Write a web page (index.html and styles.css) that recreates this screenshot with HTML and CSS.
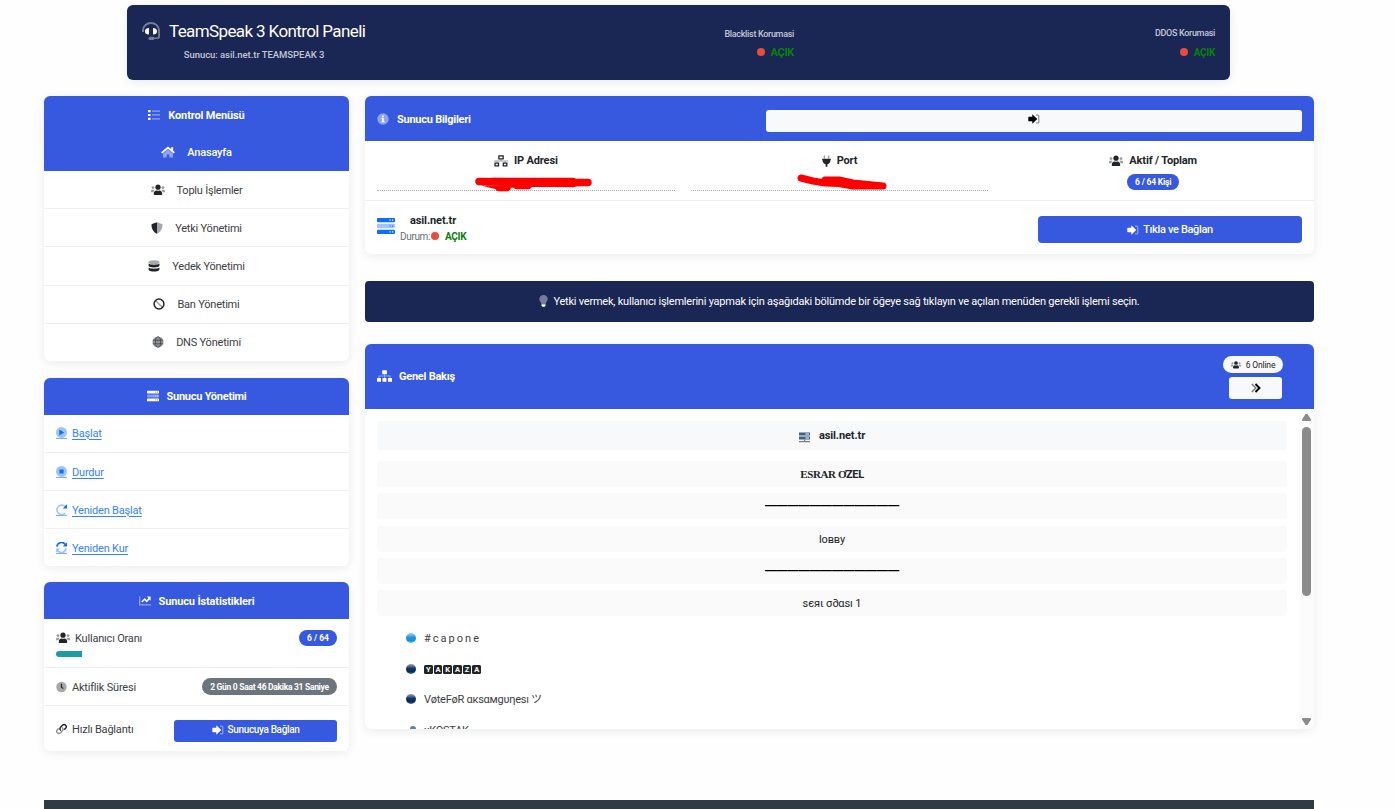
FILE: index.html
```
<!DOCTYPE html>
<html lang="tr">
<head>
    <meta charset="UTF-8">
    <meta name="viewport" content="width=device-width, initial-scale=1.0">
    <title>TeamSpeak 3 Kontrol Paneli</title>
    <link rel="stylesheet" href="styles.css">
</head>
<body>

    <!-- Icon set -->
    <svg class="sprite" xmlns="http://www.w3.org/2000/svg">
        <symbol id="i-headset" viewBox="0 0 18 18">
            <path opacity=".4" d="M0 10V8.500a9 8.500 0 0 1 18 0V14.500a2.500 2.500 0 0 1-2.500 2.500H12v1H8a1.600 1.600 0 0 1 0-3.200h4v.6h3.200c.6 0 .9-.3.900-.9V8.500a7 6.500 0 0 0-14.100 0V10z"/>
            <path d="M3 9.300C3 7.500 4.200 6 7 6v6.500C4.200 12.500 3 11.500 3 9.300zM15 9.300C15 7.500 13.800 6 11 6v6.500c2.800 0 4-1 4-3.200z"/>
        </symbol>
        <symbol id="i-list" viewBox="0 0 12 12">
            <path d="M0 1h2.600v2.200H0zM0 4.900h2.600v2.200H0zM0 8.800h2.600V11H0z"/>
            <path opacity=".45" d="M4 1.400h8v1.300H4zM4 5.300h8v1.300H4zM4 9.200h8v1.300H4z"/>
        </symbol>
        <symbol id="i-home" viewBox="0 0 14 12">
            <path opacity=".45" d="M7 3.200 2 7.400v3.700c0 .3.200.5.500.5h3.200V8.600h2.600v3h3.200c.3 0 .5-.2.500-.5V7.400z"/>
            <path d="M7 .5.100 6.300l1.100 1.300L7 2.800l5.800 4.800 1.100-1.300-1.700-1.500V1.300h-2v1.800z"/>
        </symbol>
        <symbol id="i-users" viewBox="0 0 14 12">
            <circle cx="7" cy="3.200" r="2.600"/>
            <path d="M2.800 9.900c0-2.100 1-3.500 2.700-3.500.9.500 2.100.5 3 0 1.700 0 2.700 1.400 2.700 3.500 0 .8-.3 1.100-1 1.100H3.800c-.7 0-1-.3-1-1.100z"/>
            <g opacity=".45"><circle cx="2" cy="3.600" r="1.400"/><circle cx="12" cy="3.600" r="1.400"/><path d="M0 7.400C0 6.300.5 5.700 1.200 5.700h1.600c.3 0 .6.100.8.300C2.900 6.500 2.500 7.400 2.400 8.200H0zM14 7.400c0-1.100-.5-1.700-1.200-1.700h-1.600c-.3 0-.6.100-.8.300.7.500 1.100 1.400 1.200 2.200H14z"/></g>
        </symbol>
        <symbol id="i-shield" viewBox="0 0 12 12">
            <path d="M6 .3v11.400C3 10.300.6 7.500.5 2.900c0-.5.200-.7.500-.8z"/>
            <path opacity=".4" d="M6 .3v11.400c3-1.400 5.400-4.200 5.500-8.800 0-.5-.2-.7-.5-.8z"/>
        </symbol>
        <symbol id="i-database" viewBox="0 0 12 12">
            <ellipse opacity=".4" cx="6" cy="2.200" rx="5.400" ry="2"/>
            <path d="M.6 3.600c1.700 1.600 9.100 1.600 10.800 0v2.200c0 2.200-10.800 2.200-10.800 0z"/>
            <path d="M.6 7.500c1.700 1.600 9.100 1.600 10.800 0v2.200c0 2.400-10.800 2.400-10.800 0z"/>
        </symbol>
        <symbol id="i-ban" viewBox="0 0 12 12">
            <circle cx="6" cy="6" r="4.900" fill="none" stroke="currentColor" stroke-width="1.500"/>
            <path opacity=".45" d="m3 2.100 7 6.900-1 1L2.100 3z"/>
        </symbol>
        <symbol id="i-globe" viewBox="0 0 12 12">
            <circle opacity=".5" cx="6" cy="6" r="5.500"/>
            <g fill="none" stroke="currentColor" stroke-width=".8" opacity=".7"><ellipse cx="6" cy="6" rx="2.600" ry="5.200"/><path d="M.8 4.200h10.400M.8 7.800h10.400"/></g>
        </symbol>
        <symbol id="i-server" viewBox="0 0 18 16">
            <path fill-rule="evenodd" d="M1 0h16q1 0 1 1v2.300q0 1-1 1H1q-1 0-1-1V1q0-1 1-1zm11.500 1.600v1.200h1.200V1.600zm2.500 0v1.200h1.200V1.600zM1 11.700h16q1 0 1 1V15q0 1-1 1H1q-1 0-1-1v-2.300q0-1 1-1zm11.500 1.600v1.200h1.200v-1.200zm2.500 0v1.200h1.200v-1.200z"/>
            <path opacity=".4" d="M1 5.800h16q1 0 1 1v2.400q0 1-1 1H1q-1 0-1-1V6.800q0-1 1-1z"/>
            <path d="M12.500 7.400h1.200v1.200h-1.200zM15 7.400h1.200v1.200H15z"/>
        </symbol>
        <symbol id="i-play" viewBox="0 0 12 12">
            <circle opacity=".4" cx="6" cy="6" r="6"/>
            <path d="M3.600 2.800v6.400l5.400-3.200z"/>
        </symbol>
        <symbol id="i-stop" viewBox="0 0 12 12">
            <circle opacity=".4" cx="6" cy="6" r="6"/>
            <path d="M3.700 3.700h4.600v4.600H3.700z"/>
        </symbol>
        <symbol id="i-redo" viewBox="0 0 12 12">
            <path opacity=".4" d="M10 2.800A5.200 5.200 0 1 0 10 10" fill="none" stroke="currentColor" stroke-width="1.800"/>
            <path d="M12 .4v4.600H7.400z"/>
        </symbol>
        <symbol id="i-sync" viewBox="0 0 12 12">
            <path d="M1 5A5 5 0 0 1 10 2.600" fill="none" stroke="currentColor" stroke-width="1.900"/>
            <path d="M12 .2v4.700H7.400z"/>
            <g opacity=".4"><path d="M11 7A5 5 0 0 1 2 9.400" fill="none" stroke="currentColor" stroke-width="1.900"/><path d="M0 11.800V7.100h4.600z"/></g>
        </symbol>
        <symbol id="i-chart" viewBox="0 0 12 12">
            <path opacity=".45" d="M0 1.500h1.300v7.700H12v1.400H0z"/>
            <path d="M11.600 1.500v4.200l-1.200-1.200-2.600 2.900L5.600 5.200 3.400 7.500l-1.100-1.100 3.300-3.500L7.800 5l1.600-1.700L8 1.500z"/>
        </symbol>
        <symbol id="i-clock" viewBox="0 0 12 12">
            <circle opacity=".4" cx="6" cy="6" r="5.700"/>
            <path d="M5.300 2.500h1.300v3.300l1.700 1.600-.8.900-2.200-1.900z"/>
        </symbol>
        <symbol id="i-link" viewBox="0 0 12 12">
            <g fill="none" stroke="currentColor" stroke-width="1.600"><path d="M5.300 7.700C4 6.400 4 5 5 4l2-2c2.500-2.300 5.500.800 3.500 3.200L9 6.700"/><path opacity=".5" d="M6.700 4.300C8 5.600 8 7 7 8l-2 2C2.500 12.300-.5 9.200 1.500 6.800L3 5.300"/></g>
        </symbol>
        <symbol id="i-signin" viewBox="0 0 12 12">
            <path d="M4.300 1.200 9.300 6l-5 4.800V8.300H.9Q.3 8.300.3 7.600V4.400q0-.7.600-.7h3.400z"/>
            <path opacity=".4" d="M8 1.500h1.800q1.600 0 1.600 1.600v5.800q0 1.600-1.600 1.600H8V9.300h1.600q.5 0 .5-.5V3.200q0-.5-.5-.5H8z"/>
        </symbol>
        <symbol id="i-info" viewBox="0 0 12 12">
            <circle opacity=".45" cx="6" cy="6" r="5.700"/>
            <path d="M5 2.400h1.800V4H5zM4.500 4.800h2.300v3.300h.7v1.100H4.500V8.100h.7V5.900h-.7z"/>
        </symbol>
        <symbol id="i-network" viewBox="0 0 14 12">
            <path fill="none" stroke="currentColor" stroke-width="1.300" d="M4.900.9h4.200v2.900H4.900zM1 8.100h3.500v2.800H1zM9.300 8.100h3.500v2.800H9.300z"/>
            <path opacity=".45" d="M6.500 4.400h1v1.100H14v1h-2.500v1h-1v-1h-7v1h-1v-1H0v-1h6.500z"/>
        </symbol>
        <symbol id="i-plug" viewBox="0 0 9 12">
            <path opacity=".45" d="M1.700.4h1.400v3.200H1.700zM5.900.4h1.400v3.200H5.900z"/>
            <path d="M.2 3.800h8.600V5h-.3c0 2.300-1.200 3.900-3.100 4.300v2.400H3.600V9.300C1.700 8.900.5 7.300.5 5H.2z"/>
        </symbol>
        <symbol id="i-bulb" viewBox="0 0 9 12">
            <path opacity=".4" d="M4.500.1a4.200 4.200 0 0 1 4.200 4.200c0 2-1.700 2.700-2 4.600H2.300C2 7 .3 6.300.3 4.300A4.200 4.200 0 0 1 4.500.1z"/>
            <path d="M2.500 9.300h4v1.200l-.8 1.300H3.300l-.8-1.300z"/>
        </symbol>
        <symbol id="i-sitemap" viewBox="0 0 15 12">
            <path d="M5.700.2h3.700q.5 0 .5.500v3q0 .5-.5.500H5.700q-.5 0-.5-.5v-3q0-.5.500-.5zM.5 8h3q.5 0 .5.500v2.800q0 .5-.5.500h-3q-.5 0-.5-.5V8.500Q0 8 .5 8zM6 8h3q.5 0 .5.500v2.800q0 .5-.5.500H6q-.5 0-.5-.5V8.500Q5.500 8 6 8zM11.500 8h3q.5 0 .5.500v2.800q0 .5-.5.500h-3q-.5 0-.5-.5V8.500q0-.5.500-.5z"/>
            <path opacity=".45" d="M7 4.200h1v1.300h5.600V8h-1V6.500H8V8H7V6.500H2.400V8h-1V5.500H7z"/>
        </symbol>
        <symbol id="i-angles" viewBox="0 0 10 10">
            <path opacity=".5" d="m.8 1 4 4-4 4" fill="none" stroke="currentColor" stroke-width="1.500"/>
            <path d="m4.500 1 4 4-4 4" fill="none" stroke="currentColor" stroke-width="1.900"/>
        </symbol>
        <symbol id="i-node" viewBox="0 0 11 11">
            <path fill="#3f6184" d="M0 .5h11v3H0zM0 4.500h11v3H0z"/>
            <path fill="#fff" d="M6.500 1.500h3.500v1H6.500zM6.500 5.500h3.500v1H6.500z"/>
            <path fill="#777f86" d="M5 7.500h1.200V9H11v1.200H0V9h5z"/>
        </symbol>
    </svg>

    <!-- Top header -->
    <header class="topbar">
        <div class="brand">
            <div class="brand-title"><svg class="icon icon-lg"><use href="#i-headset"/></svg>TeamSpeak 3 Kontrol Paneli</div>
            <div class="brand-sub">Sunucu: asil.net.tr TEAMSPEAK 3</div>
        </div>
        <div class="protection protection-mid">
            <div class="protection-label">Blacklist Korumasi</div>
            <div class="status"><i class="dot"></i>AÇIK</div>
        </div>
        <div class="protection">
            <div class="protection-label">DDOS Korumasi</div>
            <div class="status status-sm"><i class="dot"></i>AÇIK</div>
        </div>
    </header>

    <main class="layout">
        <aside class="sidebar">
            <!-- Control menu -->
            <section class="card">
                <h2 class="card-header"><svg class="icon"><use href="#i-list"/></svg>Kontrol Menüsü</h2>
                <nav class="menu">
                    <a class="menu-item active"><svg class="icon icon-wide"><use href="#i-home"/></svg>Anasayfa</a>
                    <a class="menu-item"><svg class="icon icon-wide"><use href="#i-users"/></svg>Toplu İşlemler</a>
                    <a class="menu-item"><svg class="icon"><use href="#i-shield"/></svg>Yetki Yönetimi</a>
                    <a class="menu-item tall"><svg class="icon"><use href="#i-database"/></svg>Yedek Yönetimi</a>
                    <a class="menu-item"><svg class="icon"><use href="#i-ban"/></svg>Ban Yönetimi</a>
                    <a class="menu-item"><svg class="icon"><use href="#i-globe"/></svg>DNS Yönetimi</a>
                </nav>
            </section>

            <!-- Server management -->
            <section class="card">
                <h2 class="card-header card-header-server"><svg class="icon"><use href="#i-server"/></svg>Sunucu Yönetimi</h2>
                <ul class="actions">
                    <li><span class="action-icon"><svg class="icon"><use href="#i-play"/></svg></span><a>Başlat</a></li>
                    <li><span class="action-icon"><svg class="icon"><use href="#i-stop"/></svg></span><a>Durdur</a></li>
                    <li><span class="action-icon"><svg class="icon"><use href="#i-redo"/></svg></span><a>Yeniden Başlat</a></li>
                    <li><span class="action-icon"><svg class="icon"><use href="#i-sync"/></svg></span><a>Yeniden Kur</a></li>
                </ul>
            </section>

            <!-- Server statistics -->
            <section class="card">
                <h2 class="card-header"><svg class="icon"><use href="#i-chart"/></svg>Sunucu İstatistikleri</h2>
                <div class="stat stat-users">
                    <div class="stat-line">
                        <span class="stat-label"><svg class="icon icon-wide"><use href="#i-users"/></svg>Kullanıcı Oranı</span>
                        <span class="badge badge-ratio">6 / 64</span>
                    </div>
                    <div class="progress"><div class="progress-bar" style="width: 9.375%"></div></div>
                </div>
                <div class="stat">
                    <div class="stat-line">
                        <span class="stat-label stat-uptime"><svg class="icon"><use href="#i-clock"/></svg>Aktiflik Süresi</span>
                        <span class="badge badge-grey">2 Gün 0 Saat 46 Dakika 31 Saniye</span>
                    </div>
                </div>
                <div class="stat stat-connect">
                    <div class="stat-line">
                        <span class="stat-label"><svg class="icon"><use href="#i-link"/></svg>Hızlı Bağlantı</span>
                        <a class="btn btn-sm"><svg class="icon"><use href="#i-signin"/></svg>Sunucuya Bağlan</a>
                    </div>
                </div>
            </section>
        </aside>

        <div class="content">
            <!-- Server info -->
            <section class="card info">
                <div class="info-header">
                    <h2><svg class="icon"><use href="#i-info"/></svg>Sunucu Bilgileri</h2>
                    <a class="btn-light"><svg class="icon"><use href="#i-signin"/></svg></a>
                </div>
                <div class="info-grid">
                    <div class="info-cell dotted">
                        <div class="info-name"><svg class="icon icon-wide"><use href="#i-network"/></svg>IP Adresi</div>
                        <svg class="scribble" width="118" height="15" viewBox="0 0 118 15"><path d="M4 4.500 60 5l53 .5M8 5l16 4M24 7h30M24 10.500h8M42 8.500h11M60 5l40 1M18 4.500h80M56 6l42 .5" fill="none" stroke="#f00" stroke-width="7.500" stroke-linecap="round" stroke-linejoin="round"/></svg>
                    </div>
                    <div class="info-cell dotted">
                        <div class="info-name"><svg class="icon icon-slim"><use href="#i-plug"/></svg>Port</div>
                        <svg class="scribble scribble-port" width="90" height="16" viewBox="0 0 90 16"><path d="m4 4 12 3 12 2 28 1 30 2M28 6h14l14 3 30 3H56L28 7" fill="none" stroke="#f00" stroke-width="7" stroke-linecap="round" stroke-linejoin="round"/></svg>
                    </div>
                    <div class="info-cell">
                        <div class="info-name"><svg class="icon icon-wide"><use href="#i-users"/></svg>Aktif / Toplam</div>
                        <span class="badge badge-people">6 / 64 Kişi</span>
                    </div>
                </div>
                <div class="server-row">
                    <svg class="server-icon"><use href="#i-server"/></svg>
                    <div class="server-meta">
                        <div class="server-name">asil.net.tr</div>
                        <div class="server-state">Durum:<i class="dot"></i><b>AÇIK</b></div>
                    </div>
                    <a class="btn btn-connect"><svg class="icon"><use href="#i-signin"/></svg>Tıkla ve Bağlan</a>
                </div>
            </section>

            <div class="notice"><svg class="icon icon-slim"><use href="#i-bulb"/></svg>Yetki vermek, kullanıcı işlemlerini yapmak için aşağıdaki bölümde bir öğeye sağ tıklayın ve açılan menüden gerekli işlemi seçin.</div>

            <!-- Overview tree -->
            <section class="card overview">
                <div class="overview-header">
                    <h2><svg class="icon icon-sitemap"><use href="#i-sitemap"/></svg>Genel Bakış</h2>
                    <div class="overview-tools">
                        <span class="badge badge-online"><svg class="icon"><use href="#i-users"/></svg>6 Online</span>
                        <a class="btn-light btn-more"><svg class="icon"><use href="#i-angles"/></svg></a>
                    </div>
                </div>
                <div class="overview-body">
                    <div class="tree">
                        <div class="tree-root"><svg class="icon"><use href="#i-node"/></svg>asil.net.tr</div>
                        <div class="channel channel-bold"><span><span class="serif">ESRAR Ơ</span>ZEL</span></div>
                        <div class="channel channel-line">————————————</div>
                        <div class="channel gap-top">loвву</div>
                        <div class="channel channel-line">————————————</div>
                        <div class="channel">ѕєяι σ∂αѕı 1</div>
                        <div class="user"><i class="orb orb-light"></i><span class="spaced"># c a p o n e</span></div>
                        <div class="user"><i class="orb"></i><span class="tiles"><b>Y</b><b>A</b><b>K</b><b>A</b><b>Z</b><b>A</b></span></div>
                        <div class="user"><i class="orb"></i><span>VøteFøR αкѕαмgυηeѕı ツ</span></div>
                        <div class="user user-last"><i class="orb orb-away"></i><span>xKOSTAK</span></div>
                    </div>
                    <div class="scrollbar">
                        <i class="arrow-up"></i>
                        <i class="thumb"></i>
                        <i class="arrow-down"></i>
                    </div>
                </div>
            </section>
        </div>
    </main>

    <footer class="footer"></footer>

</body>
</html>
```
FILE: styles.css
```
* {
    box-sizing: border-box;
}
html, body {
    height: 809px;
    overflow: hidden;
}
body {
    margin: 0;
    padding: 5px 0 0 44px;
    background-color: #fefefe;
    color: #212529;
    font-family: Roboto, "Noto Sans", "Noto Sans CJK JP", sans-serif;
    font-size: 11px;
    line-height: 16px;
}
h2 {
    margin: 0;
    font-size: 11px;
    font-weight: 700;
}
.sprite {
    display: none;
}
.icon {
    width: 12px;
    height: 12px;
    flex: none;
    fill: currentColor;
}
.icon-wide {
    width: 14px;
}
.icon-sitemap {
    width: 15px;
}
.icon-slim {
    width: 9px;
}
.icon-lg {
    width: 18px;
    height: 18px;
}
.dot {
    width: 8px;
    height: 8px;
    border-radius: 50%;
    background-color: #e74c3c;
}

/* Top header */
.topbar {
    display: flex;
    width: 1103px;
    height: 75px;
    margin-left: 83px;
    padding: 0 15px;
    border-radius: 6px;
    background-color: #1a2654;
    box-shadow: 0 2px 10px rgba(0, 0, 0, 0.08);
    color: #fff;
}
.brand {
    width: 224px;
    padding-top: 16px;
    text-align: center;
}
.brand-title {
    display: flex;
    align-items: center;
    gap: 9px;
    height: 20px;
    font-size: 17px;
    letter-spacing: -0.62px;
    white-space: nowrap;
}
.brand-sub {
    margin-top: 6px;
    color: #c3c7d4;
    font-size: 9.5px;
    font-weight: 500;
    letter-spacing: -0.05px;
}
.protection {
    margin-left: auto;
    padding-top: 20px;
    color: #c3c7d4;
    font-size: 9px;
    font-weight: 500;
    letter-spacing: -0.31px;
    text-align: right;
}
.protection-mid {
    width: 428px;
    margin-left: 0;
    padding-top: 21px;
}
.protection-label {
    height: 16px;
}
.status {
    display: flex;
    justify-content: flex-end;
    align-items: center;
    gap: 6px;
    height: 20px;
    padding-top: 1px;
    color: #0a800a;
    font-size: 11px;
    font-weight: 700;
}
.status .dot {
    margin-top: -1px;
}
.status-sm {
    margin-top: 1px;
    font-size: 10px;
}

/* Layout */
.layout {
    display: grid;
    grid-template-columns: 305px 949px;
    gap: 16px;
    height: 704px;
    margin-top: 16px;
}
.card {
    border-radius: 6px;
    background-color: #fff;
    box-shadow: 0 2px 10px rgba(0, 0, 0, 0.08);
    overflow: hidden;
}
.sidebar .card {
    margin-bottom: 16px;
}
.sidebar .card:first-child {
    margin-bottom: 17px;
}
.card-header {
    display: flex;
    justify-content: center;
    align-items: center;
    gap: 8px;
    height: 37px;
    padding-top: 2px;
    background-color: #3659e0;
    color: #fff;
    letter-spacing: -0.15px;
}
.card-header-server {
    padding-top: 1px;
    letter-spacing: -0.25px;
}
.card-header .icon {
    margin-top: -2px;
}

/* Control menu */
.menu-item {
    display: flex;
    justify-content: center;
    align-items: center;
    gap: 12px;
    height: 38px;
    padding-top: 2px;
    border-bottom: 1px solid #f0f0f1;
    color: #3c4044;
    letter-spacing: -0.22px;
}
.menu-item .icon {
    margin-top: -2px;
    color: #212529;
}
.menu-item.tall {
    height: 39px;
    padding-top: 1px;
}
.menu-item.tall ~ .menu-item {
    padding-top: 1px;
}
.menu-item:last-child {
    height: 37px;
    border-bottom: none;
}
.menu-item.active {
    border-color: #3659e0;
    background-color: #3659e0;
    color: #fff;
    font-weight: 500;
}
.menu-item.active .icon {
    color: #fff;
}

/* Server actions */
.actions {
    margin: 0;
    padding: 0;
    list-style: none;
}
.actions li {
    display: flex;
    align-items: center;
    gap: 5px;
    height: 38px;
    padding: 2px 0 0 12px;
    border-bottom: 1px solid #f0f0f1;
    color: #0d6efd;
    letter-spacing: -0.2px;
}
.actions li:first-child {
    padding-top: 0;
}
.actions li:last-child {
    height: 37px;
    border-bottom: none;
}
.actions a {
    color: #3483fd;
    text-decoration: underline;
    text-underline-offset: 2px;
}
.action-icon {
    display: flex;
    width: 11px;
    height: 12px;
    margin-top: -2px;
    border-bottom: 1px solid #79aefd;
}
.action-icon .icon {
    width: 11px;
    height: 11px;
}

/* Statistics */
.stat {
    height: 38px;
    padding: 0 12px;
    border-bottom: 1px solid #f0f0f1;
}
.stat-users {
    height: 49px;
}
.stat-connect {
    height: 45px;
    padding-top: 3px;
    border-bottom: none;
}
.stat-line {
    display: flex;
    justify-content: space-between;
    align-items: center;
    height: 37px;
}
.stat-users .stat-line {
    height: 38px;
}
.stat-connect .stat-line {
    height: 43px;
}
.stat-label {
    display: flex;
    align-items: center;
    gap: 5px;
    padding-top: 1px;
    color: #3c4044;
    letter-spacing: -0.2px;
}
.stat-uptime {
    padding-top: 2px;
}
.stat-connect .stat-label {
    padding: 0 0 2px;
}
.stat-label .icon {
    width: 11px;
    margin-top: -1px;
    color: #212529;
}
.stat-label .icon-wide {
    width: 14px;
}
.progress {
    height: 6px;
    margin-top: -6px;
    border-radius: 3px;
    overflow: hidden;
}
.progress-bar {
    height: 6px;
    background-color: #1c9ca3;
}
.badge {
    display: inline-flex;
    justify-content: center;
    align-items: center;
    height: 16px;
    border-radius: 9px;
    background-color: #3659e0;
    color: #fff;
    font-size: 8.5px;
    font-weight: 700;
}
.badge-ratio {
    width: 38px;
}
.badge-grey {
    width: 135px;
    height: 17px;
    background-color: #6c757d;
    letter-spacing: -0.3px;
}
.badge-people {
    width: 52px;
    margin-top: 5px;
    letter-spacing: -0.2px;
}
.btn {
    display: flex;
    justify-content: center;
    align-items: center;
    gap: 4px;
    border-radius: 4px;
    background-color: #3659e0;
    color: #fff;
    font-weight: 500;
    letter-spacing: -0.35px;
}
.btn-sm {
    width: 163px;
    height: 22px;
    padding-bottom: 2px;
    border-radius: 3px;
    font-size: 10px;
}
.btn-connect {
    width: 264px;
    height: 27px;
    margin: 2px 0 0 auto;
}

/* Server info */
.info {
    height: 158px;
}
.info-header {
    display: flex;
    justify-content: space-between;
    height: 45px;
    padding: 14px 12px 0;
    background-color: #3659e0;
    color: #fff;
}
.info-header h2 {
    display: flex;
    align-items: center;
    gap: 8px;
    height: 19px;
    letter-spacing: -0.25px;
}
.info-header h2 .icon {
    margin-top: -1px;
}
.btn-light {
    display: flex;
    justify-content: center;
    align-items: center;
    width: 536px;
    height: 22px;
    padding-bottom: 4px;
    border-radius: 3px;
    background-color: #f8f9fa;
    color: #000;
}
.info-grid {
    display: grid;
    grid-template-columns: repeat(3, 1fr);
    gap: 16px;
    height: 60px;
    padding: 12px 12px 0;
    border-bottom: 1px solid #f0f0f1;
}
.info-cell {
    position: relative;
    height: 38px;
    text-align: center;
}
.dotted {
    border-bottom: 1px dotted #aaa;
}
.info-name {
    display: flex;
    justify-content: center;
    align-items: center;
    gap: 6px;
    height: 16px;
    font-weight: 700;
    letter-spacing: -0.15px;
}
.info-name .icon {
    margin-top: -1px;
}
.scribble {
    position: absolute;
    top: 24px;
    left: 98px;
}
.scribble-port {
    top: 21px;
    left: 106px;
}
.server-row {
    display: flex;
    align-items: center;
    height: 53px;
    padding: 2px 12px 0;
}
.server-icon {
    width: 18px;
    height: 16px;
    margin: -6px 5px 0 0;
    fill: #0d6efd;
    color: #0d6efd;
}
.server-meta {
    text-align: center;
}
.server-name {
    font-weight: 700;
    letter-spacing: -0.1px;
}
.server-state {
    display: flex;
    align-items: center;
    color: #6a6f74;
    font-size: 10px;
    letter-spacing: -0.35px;
}
.server-state .dot {
    margin: -1px 6px 0 1px;
}
.server-state b {
    color: #0a800a;
}

/* Notice */
.notice {
    display: flex;
    justify-content: center;
    align-items: center;
    gap: 5px;
    height: 41px;
    margin: 27px 0 22px;
    border-radius: 4px;
    background-color: #1a2654;
    color: #fff;
    letter-spacing: -0.225px;
}
.notice .icon {
    margin-top: -1px;
}

/* Overview */
.overview {
    height: 385px;
}
.overview-header {
    display: flex;
    justify-content: space-between;
    height: 65px;
    padding: 12px 31px 0 12px;
    background-color: #3659e0;
    color: #fff;
}
.overview-header h2 {
    display: flex;
    align-items: center;
    gap: 7px;
    height: 41px;
    letter-spacing: -0.25px;
}
.overview-header h2 .icon {
    margin-top: -1px;
}
.overview-tools {
    display: flex;
    flex-direction: column;
    align-items: flex-end;
}
.badge-online {
    gap: 5px;
    width: 60px;
    height: 17px;
    background-color: #f8f9fa;
    color: #212529;
    font-weight: 400;
    letter-spacing: -0.15px;
}
.badge-online .icon {
    width: 10px;
    height: 10px;
}
.btn-more {
    width: 53px;
    margin: 4px 1px 0 0;
    padding-bottom: 1px;
}
.btn-more .icon {
    width: 10px;
    height: 10px;
}
.overview-body {
    display: flex;
    height: 320px;
}
.tree {
    flex: 1;
    padding: 12px 12px 0;
    overflow: hidden;
}
.tree-root {
    display: flex;
    justify-content: center;
    align-items: center;
    gap: 9px;
    height: 29px;
    margin-bottom: 11px;
    border-radius: 4px;
    background-color: #f8f9fa;
    font-weight: 700;
    letter-spacing: -0.1px;
}
.tree-root .icon {
    width: 11px;
    height: 11px;
    margin-top: 4px;
}
.channel {
    display: flex;
    justify-content: center;
    align-items: center;
    height: 26px;
    margin-bottom: 6px;
    padding-top: 1px;
    border-radius: 4px;
    background-color: #fafafa;
    letter-spacing: -0.1px;
}
.channel.gap-top {
    margin-top: 7px;
}
.channel-bold {
    font-weight: 700;
    letter-spacing: -0.4px;
}
.serif {
    font-family: "Liberation Serif", serif;
}
.channel-line {
    padding: 0 0 3px;
    color: #000;
    font-family: "Liberation Sans", sans-serif;
    font-size: 11.2px;
    font-weight: 700;
    letter-spacing: 0;
}
.user {
    display: flex;
    align-items: center;
    gap: 8px;
    height: 30.5px;
    padding: 3px 0 0 29px;
    color: #3c4044;
    letter-spacing: -0.25px;
}
.user-last {
    padding-top: 4px;
}
.orb {
    width: 10px;
    height: 10px;
    margin-top: -1px;
    border-radius: 50%;
    background: linear-gradient(#8fa8c0, #14365f 45%, #0c2b52 75%, #45688c);
}
.orb-light {
    background: linear-gradient(#a5dcf5, #2093d8 45%, #1c8fd6 75%, #6cc0ec);
}
.orb-away {
    width: 6px;
    height: 6px;
    margin: -4px 0 0 4px;
    background: #5f83ab;
}
.spaced {
    letter-spacing: -0.35px;
}
.tiles {
    display: flex;
    gap: 1px;
    letter-spacing: 0;
}
.tiles b {
    width: 8.7px;
    height: 9px;
    border-radius: 1.5px;
    background-color: #212529;
    color: #fff;
    font-size: 7.5px;
    line-height: 9px;
    text-align: center;
}
.scrollbar {
    display: flex;
    flex-direction: column;
    align-items: center;
    width: 15px;
    padding-top: 5px;
    background-color: #fcfcfc;
}
.arrow-up, .arrow-down {
    width: 9px;
    height: 7px;
    background-color: #8b8b8b;
    clip-path: polygon(40% 0, 60% 0, 100% 80%, 95% 100%, 5% 100%, 0 80%);
}
.arrow-down {
    margin-top: 122px;
    transform: rotate(180deg);
}
.thumb {
    width: 9px;
    height: 169px;
    margin-top: 6px;
    border-radius: 5px;
    background-color: #8b8b8b;
}

.footer {
    width: 1270px;
    height: 9px;
    background-color: #2f3c44;
}
```
